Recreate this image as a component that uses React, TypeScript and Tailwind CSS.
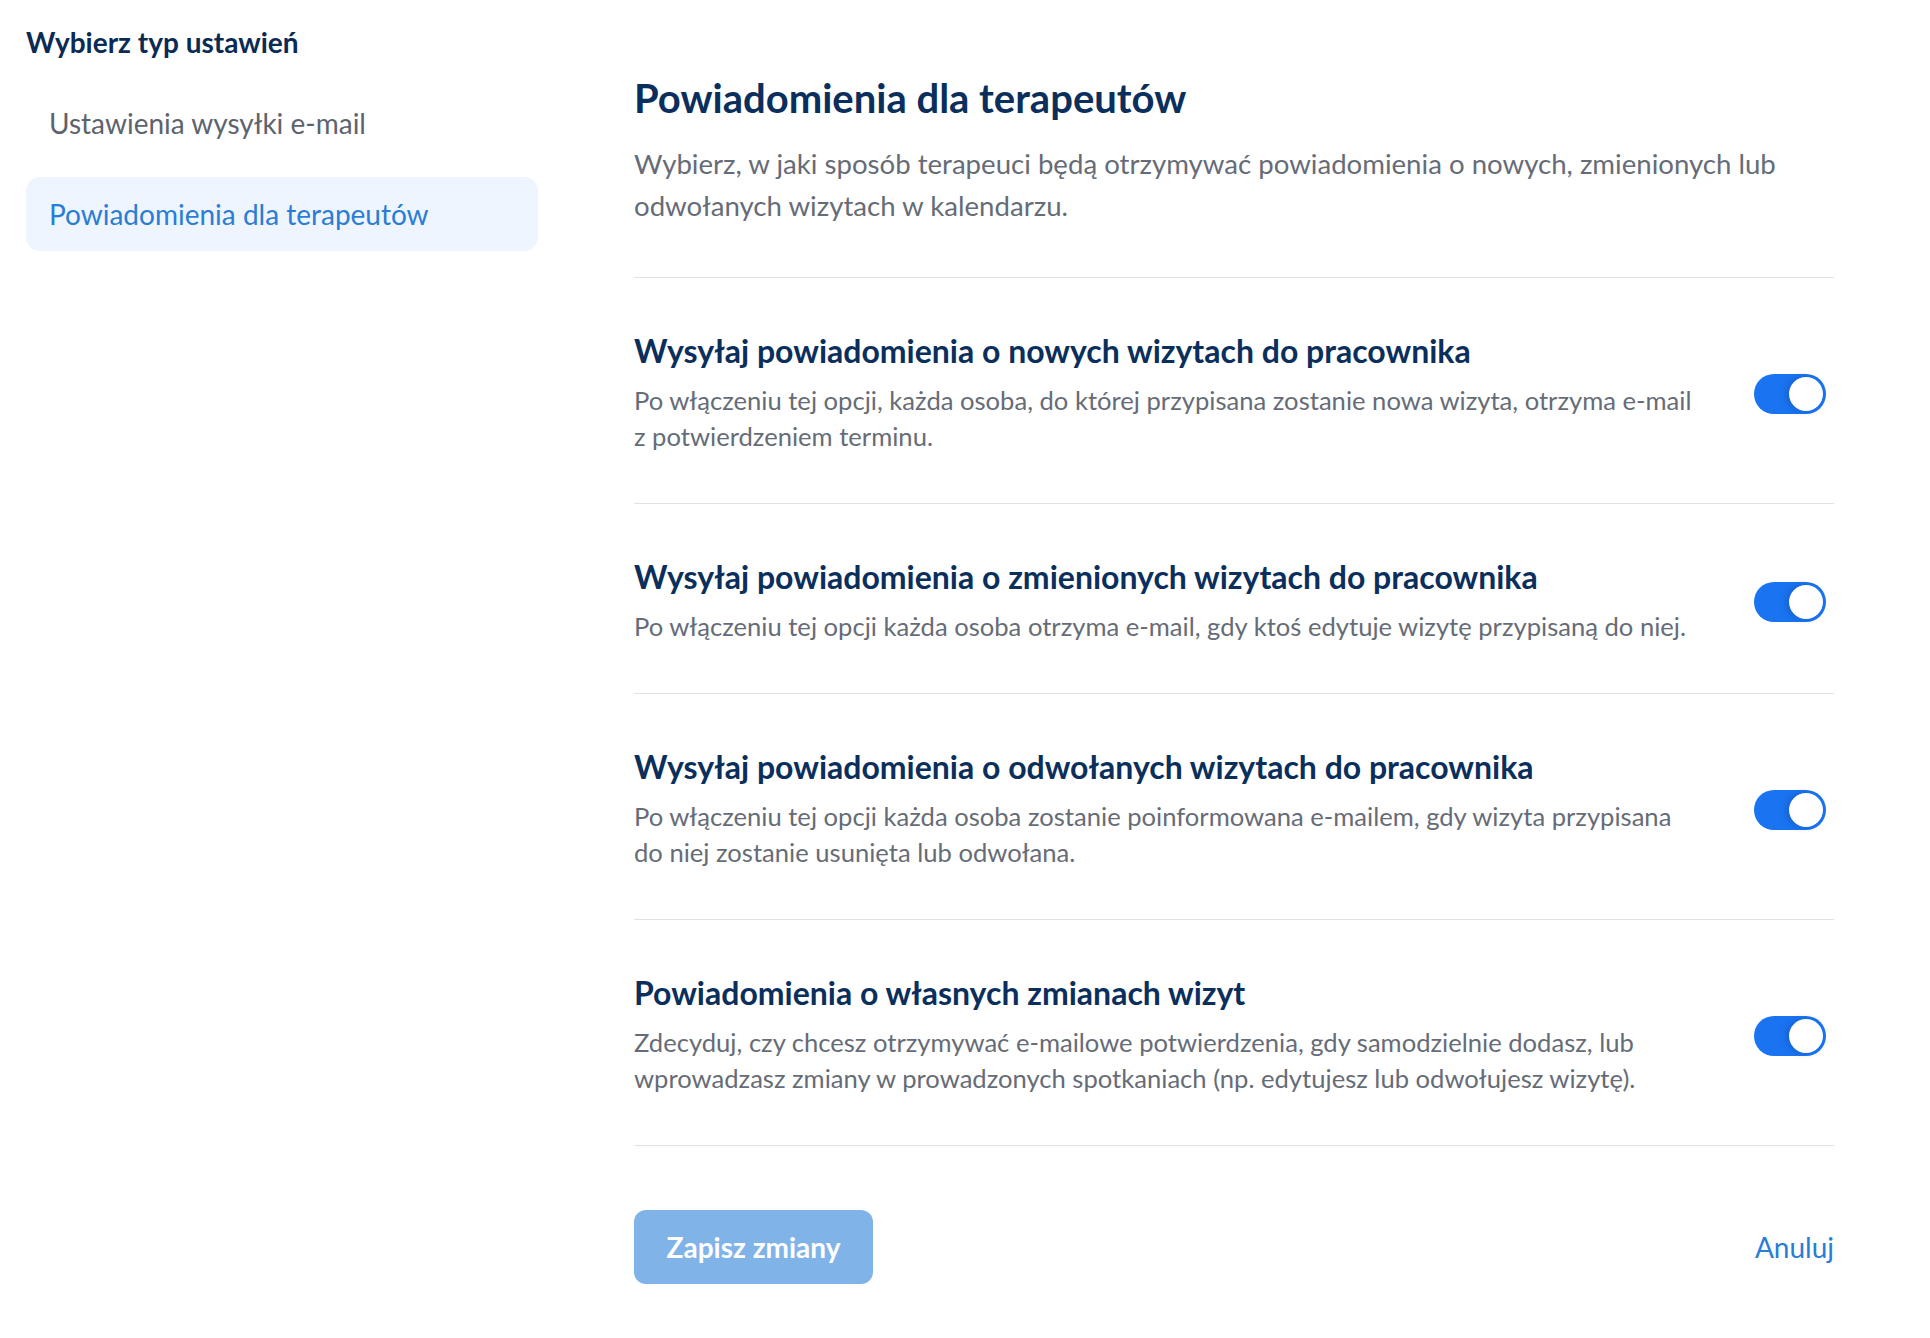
import { useState } from 'react';

const sections = [
  {
    title: 'Wysyłaj powiadomienia o nowych wizytach do pracownika',
    text: 'Po włączeniu tej opcji, każda osoba, do której przypisana zostanie nowa wizyta, otrzyma e-mail z potwierdzeniem terminu.',
  },
  {
    title: 'Wysyłaj powiadomienia o zmienionych wizytach do pracownika',
    text: 'Po włączeniu tej opcji każda osoba otrzyma e-mail, gdy ktoś edytuje wizytę przypisaną do niej.',
  },
  {
    title: 'Wysyłaj powiadomienia o odwołanych wizytach do pracownika',
    text: 'Po włączeniu tej opcji każda osoba zostanie poinformowana e-mailem, gdy wizyta przypisana do niej zostanie usunięta lub odwołana.',
  },
  {
    title: 'Powiadomienia o własnych zmianach wizyt',
    text: 'Zdecyduj, czy chcesz otrzymywać e-mailowe potwierdzenia, gdy samodzielnie dodasz, lub wprowadzasz zmiany w prowadzonych spotkaniach (np. edytujesz lub odwołujesz wizytę).',
  },
];

function Toggle({ on, onChange }: { on: boolean; onChange: () => void }) {
  return (
    <button
      role="switch"
      aria-checked={on}
      onClick={onChange}
      className={`relative flex h-[40px] w-[72px] shrink-0 items-center rounded-full px-[3px] transition-colors ${
        on ? 'justify-end bg-[#1a74f2]' : 'justify-start bg-[#d5d9df]'
      }`}
    >
      <span className="block h-[34px] w-[34px] rounded-full bg-white shadow-[-3px_0_6px_rgba(20,60,140,0.35)]" />
    </button>
  );
}

export default function App() {
  const [toggles, setToggles] = useState([true, true, true, true]);

  return (
    <div className="flex min-h-screen bg-white font-['Lato',sans-serif] antialiased">
      {/* Sidebar */}
      <aside className="w-[634px] shrink-0 pl-[26px] pt-[26px]">
        <h2 className="text-[28px] font-bold leading-[32px] text-[#0b2b55]">Wybierz typ ustawień</h2>
        <nav className="mt-[28px] flex w-[512px] flex-col gap-[17px]">
          <a className="flex h-[74px] items-center rounded-[14px] px-[23px] text-[28px] text-[#5d636d]">
            Ustawienia wysyłki e-mail
          </a>
          <a className="flex h-[74px] items-center rounded-[14px] bg-[#eef5fe] px-[23px] text-[28px] text-[#2a7dd6]">
            Powiadomienia dla terapeutów
          </a>
        </nav>
      </aside>

      {/* Main */}
      <main className="w-[1200px] pt-[74px]">
        <h1 className="text-[40px] font-bold leading-[48px] text-[#0b2f5c]">Powiadomienia dla terapeutów</h1>
        <p className="mt-[21px] text-[27.6px] leading-[42px] text-[#666c77]">
          Wybierz, w jaki sposób terapeuci będą otrzymywać powiadomienia o nowych, zmienionych lub odwołanych wizytach w
          kalendarzu.
        </p>

        <div className="mt-[50px] border-b border-[#e2e2e2]">
          {sections.map((s, i) => (
            <div key={s.title} className="flex items-center justify-between border-t border-[#e2e2e2] pb-[49px] pt-[55px]">
              <div className="w-[1072px]">
                <h3 className="text-[32px] font-bold leading-[36px] text-[#0b2f5c]">{s.title}</h3>
                <p className="mt-[13px] text-[25.6px] leading-[36px] text-[#666c77]">{s.text}</p>
              </div>
              <div className="pr-[8px]">
                <Toggle
                  on={toggles[i]}
                  onChange={() => setToggles(t => t.map((v, j) => (j === i ? !v : v)))}
                />
              </div>
            </div>
          ))}
        </div>

        <div className="mt-[64px] flex items-center justify-between">
          <button className="flex h-[74px] w-[239px] items-center justify-center rounded-[12px] bg-[#80b3e8] text-[28px] font-bold text-white">
            Zapisz zmiany
          </button>
          <button className="text-[28px] text-[#2a7dd6]">Anuluj</button>
        </div>
      </main>
    </div>
  );
}
